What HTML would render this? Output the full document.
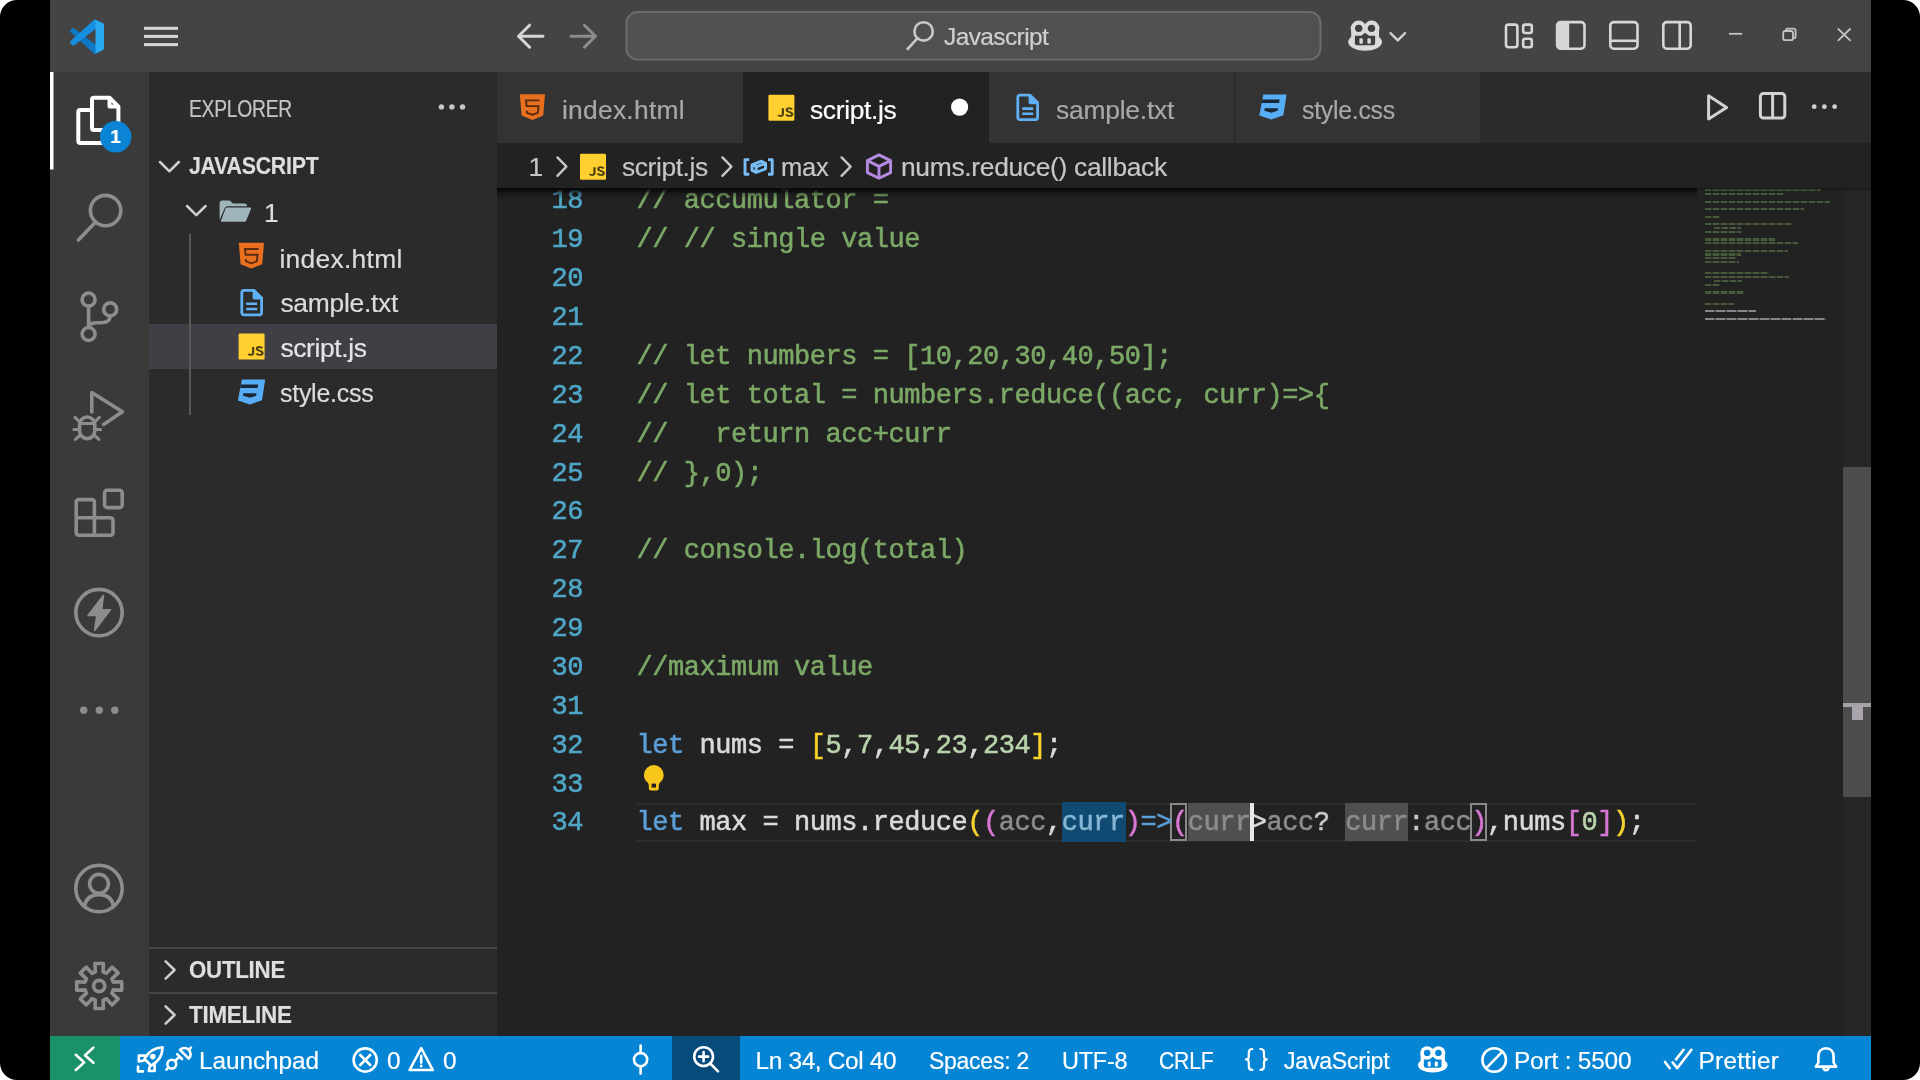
<!DOCTYPE html>
<html><head><meta charset="utf-8"><title>script.js - Javascript - Visual Studio Code</title>
<style>
*{margin:0;padding:0;box-sizing:content-box}
html,body{width:1920px;height:1080px;overflow:hidden;background:#fff;font-family:"Liberation Sans",sans-serif}
#frame{position:absolute;left:0;top:0;width:1920px;height:1080px;background:#000;border-radius:17px;overflow:hidden}
.gl{position:absolute;left:0;top:0;width:1920px;height:1080px;will-change:transform;background:transparent;filter:blur(0.5px)}
.abs{position:absolute}
.t{position:absolute;white-space:pre;line-height:1;font-family:"Liberation Sans",sans-serif;-webkit-text-stroke:0.2px currentColor}
.ln{position:absolute;left:497px;width:86px;text-align:right;white-space:pre;font-family:"Liberation Mono",monospace;font-size:27.0px;line-height:38.875px;letter-spacing:-0.453px;color:#4fa6c7;height:38.875px;-webkit-text-stroke:0.55px currentColor;margin-top:1.2px}
.cl{position:absolute;left:636.5px;white-space:pre;font-family:"Liberation Mono",monospace;font-size:27.0px;line-height:38.875px;letter-spacing:-0.453px;color:#dadada;height:38.875px;-webkit-text-stroke:0.55px currentColor;margin-top:1.2px}
.mm{position:absolute;height:2.2px;background:repeating-linear-gradient(90deg,rgba(120,170,95,.42) 0 6px,rgba(120,170,95,.16) 6px 8px)}
.mm.w{background:repeating-linear-gradient(90deg,rgba(215,215,215,.55) 0 9px,rgba(215,215,215,.25) 9px 11px)}
svg{position:absolute;left:0;top:0;overflow:visible;filter:blur(0.45px)}
</style></head>
<body>
<div id="frame">
  <!-- title bar -->
  <div class="abs" id="titlebar" style="left:50px;top:0;width:1821px;height:72px;background:#444444"></div>
  <!-- activity bar -->
  <div class="abs" id="activitybar" style="left:50px;top:72px;width:99px;height:964px;background:#3a3a3a"></div>
  <!-- sidebar -->
  <div class="abs" id="sidebar" style="left:149px;top:72px;width:348px;height:964px;background:#2b2b2b"></div>
  <div class="abs" style="left:149px;top:324px;width:348px;height:45px;background:#403f46"></div>
  <div class="abs" style="left:189px;top:234px;width:2px;height:180.5px;background:#585858"></div>
  <div class="abs" style="left:149px;top:946.5px;width:348px;height:2px;background:#454545"></div>
  <div class="abs" style="left:149px;top:991.5px;width:348px;height:2px;background:#454545"></div>
  <!-- editor -->
  <div class="abs" id="editor" style="left:497px;top:72px;width:1374px;height:964px;background:#222222"></div>
  <div class="abs" id="tabbar" style="left:497px;top:72px;width:1374px;height:71px;background:#2b2b2b"></div>
  <div class="abs" style="left:497px;top:72px;width:246px;height:71px;background:#333333"></div>
  <div class="abs" style="left:743px;top:72px;width:246px;height:71px;background:#222222"></div>
  <div class="abs" style="left:989px;top:72px;width:245px;height:71px;background:#333333"></div>
  <div class="abs" style="left:1235px;top:72px;width:245px;height:71px;background:#333333"></div>

  <!-- code area (clipped below breadcrumbs) -->
  <div class="abs" id="code" style="left:0;top:188px;width:1871px;height:848px;overflow:hidden">
   <div class="abs" style="left:0;top:-188px;width:1871px;height:1036px;will-change:transform;filter:blur(0.5px)">
<div style="position:absolute;left:636.5px;top:803.2px;width:1060.5px;height:38.9px;box-sizing:border-box;border-top:2px solid #2e2e2e;border-bottom:2px solid #2e2e2e"></div>
<div style="position:absolute;left:1061.8px;top:802.2px;width:64.0px;height:39.9px;background:#0f4a72"></div>
<div style="position:absolute;left:1187.8px;top:803.2px;width:63.0px;height:37.9px;background:#4f4f4f"></div>
<div style="position:absolute;left:1345.2px;top:803.2px;width:63.0px;height:37.9px;background:#4f4f4f"></div>
<div style="position:absolute;left:1170.0px;top:803.2px;width:16.8px;height:37.9px;box-sizing:border-box;border:2px solid #8a8a8a"></div>
<div style="position:absolute;left:1470.2px;top:803.2px;width:16.8px;height:37.9px;box-sizing:border-box;border:2px solid #8a8a8a"></div>
<div class="ln" style="top:181.20px">18</div>
<div class="cl" style="top:181.20px"><span style="color:#7ca866">// accumulator =</span></div>
<div class="ln" style="top:220.08px">19</div>
<div class="cl" style="top:220.08px"><span style="color:#7ca866">// // single value</span></div>
<div class="ln" style="top:258.95px">20</div>
<div class="ln" style="top:297.83px">21</div>
<div class="ln" style="top:336.70px">22</div>
<div class="cl" style="top:336.70px"><span style="color:#7ca866">// let numbers = [10,20,30,40,50];</span></div>
<div class="ln" style="top:375.58px">23</div>
<div class="cl" style="top:375.58px"><span style="color:#7ca866">// let total = numbers.reduce((acc, curr)=&gt;{</span></div>
<div class="ln" style="top:414.45px">24</div>
<div class="cl" style="top:414.45px"><span style="color:#7ca866">//   return acc+curr</span></div>
<div class="ln" style="top:453.33px">25</div>
<div class="cl" style="top:453.33px"><span style="color:#7ca866">// },0);</span></div>
<div class="ln" style="top:492.20px">26</div>
<div class="ln" style="top:531.08px">27</div>
<div class="cl" style="top:531.08px"><span style="color:#7ca866">// console.log(total)</span></div>
<div class="ln" style="top:569.95px">28</div>
<div class="ln" style="top:608.83px">29</div>
<div class="ln" style="top:647.70px">30</div>
<div class="cl" style="top:647.70px"><span style="color:#7ca866">//maximum value</span></div>
<div class="ln" style="top:686.58px">31</div>
<div class="ln" style="top:725.45px">32</div>
<div class="cl" style="top:725.45px"><span style="color:#5b9fd8">let</span><span style="color:#dadada"> nums = </span><span style="color:#f6d32d">[</span><span style="color:#b9d3ab">5</span><span style="color:#dadada">,</span><span style="color:#b9d3ab">7</span><span style="color:#dadada">,</span><span style="color:#b9d3ab">45</span><span style="color:#dadada">,</span><span style="color:#b9d3ab">23</span><span style="color:#dadada">,</span><span style="color:#b9d3ab">234</span><span style="color:#f6d32d">]</span><span style="color:#dadada">;</span></div>
<div class="ln" style="top:764.33px">33</div>
<div class="ln" style="top:803.20px">34</div>
<div class="cl" style="top:803.20px"><span style="color:#5b9fd8">let</span><span style="color:#dadada"> max = nums.reduce</span><span style="color:#f6d32d">(</span><span style="color:#d877d3">(</span><span style="color:#8c8c8c">acc</span><span style="color:#dadada">,</span><span style="color:#86b6d4">curr</span><span style="color:#d877d3">)</span><span style="color:#5b9fd8">=&gt;</span><span style="color:#d877d3">(</span><span style="color:#8c8c8c">curr</span><span style="color:#dadada">&gt;</span><span style="color:#8c8c8c">acc</span><span style="color:#c8c8c8">?</span> <span style="color:#8c8c8c">curr</span><span style="color:#c8c8c8">:</span><span style="color:#8c8c8c">acc</span><span style="color:#d877d3">)</span><span style="color:#dadada">,nums</span><span style="color:#d877d3">[</span><span style="color:#b9d3ab">0</span><span style="color:#d877d3">]</span><span style="color:#f6d32d">)</span><span style="color:#dadada">;</span></div>
<div style="position:absolute;left:1250.2px;top:803.2px;width:4px;height:37.9px;background:#e8e8e8"></div>
<div class="mm" style="left:1704.9px;top:188.8px;width:116.6px"></div>
<div class="mm" style="left:1704.9px;top:192.8px;width:78.8px"></div>
<div class="mm" style="left:1704.9px;top:200.5px;width:124.7px"></div>
<div class="mm" style="left:1704.9px;top:208.0px;width:99.6px"></div>
<div class="mm" style="left:1704.9px;top:215.6px;width:14.8px"></div>
<div class="mm" style="left:1704.9px;top:223.1px;width:87.0px"></div>
<div class="mm" style="left:1714.1px;top:227.0px;width:26.7px"></div>
<div class="mm" style="left:1704.9px;top:230.8px;width:35.9px"></div>
<div class="mm" style="left:1704.9px;top:238.4px;width:70.0px"></div>
<div class="mm" style="left:1704.9px;top:242.3px;width:92.9px"></div>
<div class="mm" style="left:1704.9px;top:249.5px;width:83.3px"></div>
<div class="mm" style="left:1704.9px;top:253.4px;width:35.9px"></div>
<div class="mm" style="left:1704.9px;top:257.2px;width:30.7px"></div>
<div class="mm" style="left:1704.9px;top:261.1px;width:34.4px"></div>
<div class="mm" style="left:1704.9px;top:272.3px;width:64.0px"></div>
<div class="mm" style="left:1704.9px;top:276.2px;width:84.0px"></div>
<div class="mm" style="left:1714.1px;top:280.0px;width:28.0px"></div>
<div class="mm" style="left:1704.9px;top:283.9px;width:14.8px"></div>
<div class="mm" style="left:1704.9px;top:291.4px;width:39.6px"></div>
<div class="mm" style="left:1704.9px;top:302.7px;width:29.2px"></div>
<div class="mm w" style="left:1704.9px;top:310.3px;width:51.4px"></div>
<div class="mm w" style="left:1704.9px;top:318.0px;width:121px"></div>
    <!-- scrollbar -->
    <div class="abs" style="left:1843px;top:188px;width:28px;height:848px;background:#262626"></div>
    <div class="abs" style="left:1843px;top:466.5px;width:28px;height:330px;background:#4d4d4d"></div>
    <div class="abs" style="left:1843px;top:703px;width:28px;height:4px;background:#a3a3a3"></div>
    <div class="abs" style="left:1852px;top:705px;width:11px;height:15px;background:#aaa4ac"></div>
   </div>
   <div class="abs" style="left:497px;top:0;width:1200px;height:11px;background:linear-gradient(rgba(8,8,8,.95) 0,rgba(8,8,8,.85) 20%,rgba(8,8,8,.35) 50%,rgba(8,8,8,0) 100%)"></div>
   <div class="abs" style="left:1698px;top:0;width:173px;height:3px;background:linear-gradient(rgba(10,10,10,.55),rgba(10,10,10,0))"></div>
  </div>

  <!-- status bar -->
  <div class="abs" id="statusbar" style="left:50px;top:1035.5px;width:1821px;height:45px;background:#0585d4"></div>
  <div class="abs" style="left:50px;top:1035.5px;width:69.5px;height:45px;background:#1b9168"></div>
  <div class="abs" style="left:672px;top:1035.5px;width:68px;height:45px;background:#064b7a"></div>

  <!-- ICONS -->
  <svg width="1920" height="1080" viewBox="0 0 1920 1080" fill="none">
<!-- ===== title bar ===== -->
<g id="vscode-logo" transform="translate(70 19.7) scale(0.34)">
  <path fill="#0f78c4" d="M96.46 89.2 L75.86 99.12 C73.47 100.27 70.62 99.79 68.75 97.92 L1.3 36.42 C-0.52 34.76 -0.51 31.91 1.3 30.25 L6.81 25.25 C8.3 23.9 10.53 23.8 12.13 25.01 L93.36 86.63 C96.09 88.7 100 86.75 100 83.33 V83.57 C100 85.97 98.62 88.16 96.46 89.2Z"/>
  <path fill="#178fe0" d="M96.46 10.8 L75.86 0.88 C73.47 -0.27 70.62 0.21 68.75 2.08 L1.3 63.58 C-0.52 65.24 -0.51 68.09 1.3 69.75 L6.81 74.75 C8.3 76.1 10.53 76.2 12.13 74.99 L93.36 13.37 C96.09 11.3 100 13.25 100 16.67 V16.43 C100 14.03 98.62 11.84 96.46 10.8Z"/>
  <path fill="#29a9f2" d="M75.86 99.13 C73.47 100.27 70.62 99.79 68.75 97.92 C71.06 100.22 75 98.59 75 95.33 V4.67 C75 1.41 71.06 -0.22 68.75 2.08 C70.62 0.21 73.47 -0.27 75.86 0.87 L96.45 10.78 C98.61 11.82 100 14.01 100 16.41 V83.59 C100 85.99 98.61 88.18 96.45 89.22 L75.86 99.13Z"/>
</g>
<g id="hamburger" fill="#d8d8d8">
  <rect x="144" y="26.8" width="34" height="3"/><rect x="144" y="34.9" width="34" height="3"/><rect x="144" y="43.1" width="34" height="3"/>
</g>
<g id="nav" stroke-width="3" stroke-linecap="round" stroke-linejoin="round">
  <path stroke="#d6d6d6" d="M543 36.200 H519 M529.600 25.200 L518.500 36.200 L529.600 47.200"/>
  <path stroke="#8c8c8c" d="M571 36.200 H595 M584.400 25.200 L595.500 36.200 L584.400 47.200"/>
</g>
<rect id="searchbox" x="626.5" y="12" width="694" height="47.5" rx="11" fill="#505050" stroke="#6b6b6b" stroke-width="2"/>
<g id="search-ic" stroke="#c9c9c9" stroke-width="2.6" stroke-linecap="round">
  <circle cx="923.6" cy="31.4" r="9.2"/><path d="M917.4 38.4 L907.6 49"/>
</g>
<g id="copilot-title" transform="translate(1348.2 20.4)">
  <g fill="#dadada"><circle cx="10.4" cy="8.1" r="7.9"/><circle cx="23.4" cy="8.1" r="7.9"/><ellipse cx="16.9" cy="21.7" rx="16.9" ry="8.6"/><rect x="3" y="10" width="27.800" height="12" /></g>
  <g fill="#3f3f3f"><ellipse cx="10.5" cy="7.9" rx="3.7" ry="3.6"/><ellipse cx="23.3" cy="7.9" rx="3.7" ry="3.600"/>
  <path d="M6.7 15.3 H13 L16.9 12.4 L20.8 15.3 H26.9 V22.800 a2 2 0 0 1 -2 2 H8.700 a2 2 0 0 1 -2 -2 Z"/></g>
  <g fill="#dadada"><rect x="11.2" y="17.8" width="3.4" height="5.600" rx="1.2"/><rect x="19.2" y="17.8" width="3.400" height="5.600" rx="1.200"/></g>
</g>
<path id="chev-title" stroke="#d0d0d0" stroke-width="2.4" stroke-linecap="round" stroke-linejoin="round" d="M1390.5 33.2 L1397.8 40.4 L1405 33.2"/>
<g id="layout-icons" stroke="#d6d6d6" stroke-width="2.6">
  <rect x="1506" y="24.6" width="11.4" height="22.6" rx="2.4"/>
  <rect x="1523.2" y="24.6" width="8.6" height="8.4" rx="2"/>
  <rect x="1523.2" y="38.8" width="8.6" height="8.4" rx="2"/>
  <rect x="1557.1" y="22.1" width="27.4" height="26.6" rx="3.4"/>
  <path fill="#d6d6d6" stroke="none" d="M1557.1 25.5 a3.4 3.4 0 0 1 3.4 -3.4 H1569.2 V48.7 H1560.5 a3.4 3.4 0 0 1 -3.4 -3.4 Z"/>
  <rect x="1610.3" y="22.1" width="27.2" height="26.6" rx="3.4"/>
  <path d="M1610.3 40.8 H1637.5"/>
  <rect x="1663.3" y="22.1" width="27.4" height="26.6" rx="3.4"/>
  <path d="M1679.7 22.1 V48.7"/>
</g>
<g id="winctl" stroke="#c4c4c4" stroke-width="1.8">
  <path d="M1729 33.8 H1742.2"/>
  <rect x="1783.2" y="31" width="9.8" height="9.2" rx="2"/>
  <path d="M1786 30.6 V30.4 a1.8 1.8 0 0 1 1.8 -1.8 H1793.6 a2 2 0 0 1 2 2 V36.4 a1.8 1.8 0 0 1 -1.8 1.8 H1793.4"/>
  <path d="M1837.8 28.5 L1850.6 40.8 M1850.6 28.5 L1837.8 40.8"/>
</g>

<!-- ===== activity bar ===== -->
<rect x="50" y="72" width="3.500" height="97.500" fill="#ffffff"/>
<g id="files" stroke="#ffffff" stroke-width="4" stroke-linejoin="round" stroke-linecap="round">
  <path d="M92 99.7 a2 2 0 0 1 2 -2 H109.5 L118.4 106.6 V128 a2 2 0 0 1 -2 2 H94 a2 2 0 0 1 -2 -2 Z"/>
  <path d="M109.5 98.2 V106.6 H118"/>
  <path d="M90.5 110 H80.3 a2 2 0 0 0 -2 2 V141 a2 2 0 0 0 2 2 H102.3 a2 2 0 0 0 2 -2 V132"/>
</g>
<circle cx="115.7" cy="136.8" r="15.7" fill="#0b84d6"/>
<g id="act-search" stroke="#8d8d8d" stroke-width="3.6" stroke-linecap="round">
  <circle cx="105.600" cy="210.600" r="15.200"/><path d="M95.400 222.200 L78.400 240"/>
</g>
<g id="act-git" stroke="#8d8d8d" stroke-width="3.6" stroke-linecap="round">
  <circle cx="88.600" cy="299.600" r="6.500"/><circle cx="88.600" cy="334" r="6.500"/><circle cx="110.200" cy="309.400" r="6.500"/>
  <path d="M88.6 306 V327.6 M110.2 315.8 C110.2 322.6 104 322.8 97 322.8 C93 322.8 89.6 323.6 88.6 326.6"/>
</g>
<g id="act-debug" stroke="#8d8d8d" stroke-width="3.6" stroke-linecap="round" stroke-linejoin="round">
  <path d="M91.8 412 V392.6 L122.4 411.8 L103.6 424.4"/>
  <path d="M79.6 424.6 a7.6 7.6 0 0 1 15.2 0 V431 a7.6 7.6 0 0 1 -15.2 0 Z"/>
  <path stroke-width="3" d="M80 423.4 H94.4 M79.4 421.6 L75 417.4 M95 421.6 L99.4 417.4 M79 429.4 H73.8 M95.4 429.4 H100.6 M80.4 435 L75.4 439.4 M94 435 L99 439.4"/>
</g>
<g id="act-ext" stroke="#8d8d8d" stroke-width="3.6" stroke-linejoin="round">
  <path d="M76.2 517.8 V502 a2.4 2.4 0 0 1 2.4 -2.4 H92 a2.4 2.4 0 0 1 2.4 2.4 V517.8 H110.6 a2.4 2.4 0 0 1 2.4 2.4 V532.8 a2.4 2.4 0 0 1 -2.4 2.4 H78.6 a2.4 2.4 0 0 1 -2.4 -2.4 Z"/>
  <path d="M76.2 517.8 H94.4 V535.2"/>
  <rect x="104.6" y="490.2" width="17.6" height="17.4" rx="2.6"/>
</g>
<g id="act-bolt">
  <circle cx="99" cy="612.6" r="23.2" stroke="#8d8d8d" stroke-width="3.6"/>
  <path fill="#8d8d8d" stroke="#8d8d8d" stroke-width="1.6" stroke-linejoin="round" d="M103.4 595.6 L88 615.4 H96.8 L94.6 630.4 L110.4 609.8 H101.6 Z"/>
</g>
<g id="act-more" fill="#8d8d8d"><circle cx="83.7" cy="710.2" r="3.7"/><circle cx="99.3" cy="710.2" r="3.7"/><circle cx="114.8" cy="710.2" r="3.7"/></g>
<g id="act-account" stroke="#8d8d8d" stroke-width="3.6" stroke-linecap="round">
  <circle cx="99" cy="888.5" r="23.2"/><circle cx="99" cy="883.8" r="9.4"/>
  <path d="M84.6 905.6 C86.4 897.6 92 894.6 99 894.6 C106 894.6 111.6 897.6 113.4 905.6"/>
</g>
<g id="act-gear" stroke="#8d8d8d" stroke-width="3.6" stroke-linejoin="round">
  <path d="M95.3 971.9 L95.0 963.5 L103.4 963.5 L103.1 971.9 L106.4 973.3 L112.1 967.1 L118.1 973.1 L111.9 978.8 L113.3 982.1 L121.7 981.8 L121.7 990.2 L113.3 989.9 L111.9 993.2 L118.1 998.9 L112.1 1004.9 L106.4 998.7 L103.1 1000.1 L103.4 1008.5 L95.0 1008.5 L95.3 1000.1 L92.0 998.7 L86.3 1004.9 L80.3 998.9 L86.5 993.2 L85.1 989.9 L76.7 990.2 L76.7 981.8 L85.1 982.1 L86.5 978.8 L80.3 973.1 L86.3 967.1 L92.0 973.3 Z"/><circle cx="99.200" cy="986" r="5.600"/>
</g>

<!-- ===== sidebar ===== -->
<g fill="#c8c8c8"><circle cx="441.4" cy="106.9" r="2.7"/><circle cx="451.9" cy="106.9" r="2.7"/><circle cx="462.5" cy="106.9" r="2.7"/></g>
<g stroke="#cfcfcf" stroke-width="2.5" stroke-linecap="round" stroke-linejoin="round">
  <path d="M160 162 L169.4 171.3 L178.8 162"/>
  <path d="M187 206 L196.3 215.2 L205.6 206"/>
  <path d="M165.6 961.4 L174.6 970 L165.6 978.6"/>
  <path d="M165.6 1006.4 L174.6 1015 L165.6 1023.6"/>
</g>
<g id="folder-open" fill="#a0b4bc">
  <path d="M219.600 203.200 a2.800 2.800 0 0 1 2.800 -2.800 H229.600 L233 203.400 H244.600 a2.400 2.400 0 0 1 2.400 2.400 V206.200 H227.400 a2.600 2.600 0 0 0 -2.400 1.600 L219.600 219.800 Z"/>
  <path d="M227.200 207.600 H250.200 a0.900 0.900 0 0 1 0.800 1.300 L246.200 220.400 a2 2 0 0 1 -1.800 1.300 H221.800 a0.900 0.900 0 0 1 -0.800 -1.300 L225.400 208.900 a2 2 0 0 1 1.800 -1.300 Z"/>
</g>

<!-- file icons -->
<defs>
  <g id="i-html">
    <path fill="#e8701e" d="M0.2 0 H25.4 L23.6 21.4 L12.8 25.8 L2 21.4 Z"/>
    <path fill="none" stroke="#5a2a10" stroke-width="1.900" stroke-linejoin="miter" d="M19.900 6.200 H6.400 L7 11.900 H19 L18.200 18.600 L12.800 20.500 L7.400 18.600 L7.200 16.400"/>
  </g>
  <g id="i-js">
    <rect x="0" y="0" width="26" height="26" rx="1.2" fill="#ffd02f"/>
    <path fill="none" stroke="#4f4212" stroke-width="2.2" transform="translate(0.900 2.100) scale(1 0.830)" d="M13.6 13.600 V20.400 C13.600 22.200 12.800 23.100 11.200 23.100 C10.100 23.100 9.400 22.700 8.800 21.900 M22.800 15.200 C22.100 14.200 21.200 13.600 19.900 13.600 C18.300 13.600 17.400 14.500 17.400 15.800 C17.400 18.800 23 17.700 23 20.700 C23 22.100 21.900 23.100 20.100 23.100 C18.600 23.100 17.500 22.500 16.800 21.300"/>
  </g>
  <g id="i-txt" fill="none" stroke="#5fb0f4" stroke-width="2.800" stroke-linejoin="round">
    <path d="M1.600 3.600 a2 2 0 0 1 2 -2 H13.800 L21.400 9.200 V24 a2 2 0 0 1 -2 2 H3.600 a2 2 0 0 1 -2 -2 Z"/>
    <path fill="#5fb0f4" d="M13.800 1.800 V9.200 H21.200 Z"/>
    <path stroke-width="2.600" d="M6 15 H17 M6 20.200 H17"/>
  </g>
  <g id="i-css">
    <path fill="#58aef6" d="M4.300 0.600 H27.600 L24.400 21.400 L12.400 25.600 L0.300 21.600 Z"/>
    <path fill="#1c2735" d="M3.200 5.800 H20.600 L20.100 9.200 H2.600 Z M5.600 14.400 H19 L18.600 17 L12.400 19 L5.400 17 Z"/>
  </g>
</defs>
<use href="#i-html" x="238.6" y="242.8"/>
<use href="#i-txt" x="240.2" y="288.8"/>
<use href="#i-js" x="238.6" y="333.6"/>
<use href="#i-css" x="237.6" y="378.8"/>
<!-- tabs -->
<use href="#i-html" x="519.6" y="94.2"/>
<use href="#i-js" x="768.4" y="94.8"/>
<use href="#i-txt" x="1016.2" y="93.6"/>
<use href="#i-css" x="1259" y="93.8"/>
<circle cx="959.6" cy="107.1" r="8.6" fill="#ffffff"/>
<rect x="1234" y="72" width="1.4" height="71" fill="#272727"/>
<!-- tab bar actions -->
<g stroke="#d2d2d2" stroke-width="3" stroke-linejoin="round">
  <path d="M1708.6 95.8 L1726.6 107.4 L1708.6 119 Z"/>
  <rect x="1760.4" y="93.6" width="24.4" height="24.4" rx="3"/>
  <path d="M1772.6 93.6 V118"/>
</g>
<g fill="#d2d2d2"><circle cx="1814.2" cy="106.7" r="2.4"/><circle cx="1824.4" cy="106.7" r="2.4"/><circle cx="1834.6" cy="106.7" r="2.4"/></g>

<!-- breadcrumbs -->
<g stroke="#c6c6c6" stroke-width="2.4" stroke-linecap="round" stroke-linejoin="round">
  <path d="M557.4 157.4 L566.4 166.6 L557.4 175.8"/>
  <path d="M722.4 157.4 L731.4 166.6 L722.4 175.8"/>
  <path d="M841.6 157.4 L850.6 166.6 L841.6 175.8"/>
</g>
<use href="#i-js" x="580" y="153.8" transform=""/>
<g id="sym-var" stroke="#78bdf6" stroke-width="2.900" stroke-linejoin="round" fill="none">
  <path d="M749.2 159.600 H745 V174.200 H749.200"/>
  <path d="M768 159.600 H772.200 V174.200 H768"/>
  <path d="M752 164.800 L761.400 161.200 L765.600 163.200 V168.800 L756.200 172.400 L752 170.400 Z M752 164.800 L756.200 166.800 L765.600 163.200 M756.200 166.800 V172.400"/>
</g>
<g id="sym-cube" stroke="#b48ae0" stroke-width="2.900" stroke-linejoin="round" fill="none">
  <path d="M879 154.900 L890.600 160.600 V172.600 L879 178.300 L867.400 172.600 V160.600 Z M867.400 160.600 L879 166.400 L890.600 160.600 M879 166.400 V178.300"/>
</g>

<!-- lightbulb -->
<g id="bulb">
  <path fill="#f7c61a" d="M653.8 765 a9.9 9.9 0 0 1 9.9 9.9 c0 3.6 -1.8 5.6 -3.4 7.4 c-0.9 1 -1.5 2 -1.5 3.2 V788.6 a2 2 0 0 1 -2 2 H650.8 a2 2 0 0 1 -2 -2 V785.5 c0 -1.2 -0.6 -2.2 -1.5 -3.2 c-1.6 -1.8 -3.4 -3.800 -3.4 -7.4 a9.900 9.900 0 0 1 9.900 -9.900 Z"/>
  <rect x="651.6" y="783.6" width="4.4" height="4" fill="#222"/>
</g>

<!-- ===== status bar ===== -->
<g stroke="#ffffff" stroke-width="2.6" stroke-linecap="round" stroke-linejoin="round" fill="none">
  <!-- remote -->
  <path d="M75.800 1054.800 L84.200 1062.400 L75.800 1070 M93.400 1047.600 L85 1055.200 L93.400 1062.800"/>
  <!-- rocket -->
  <path d="M162.600 1047.400 C155 1047.600 148.500 1051.500 144.500 1059 L151.200 1065.600 C158.600 1061.600 162.400 1055 162.600 1047.400 Z M147.400 1055.600 H138.800 V1061.600 L143.800 1060.400 M154.600 1063.200 V1071 H148.800 L149.800 1066.400 M138 1066.600 V1071.400 H143"/>
  <circle cx="152.800" cy="1056.600" r="1.500" fill="#ffffff"/>
  <!-- plug -->
  <circle cx="171.800" cy="1064.200" r="4.400"/>
  <path d="M168.600 1067.400 L166.400 1069.600 M175 1061 L178.400 1057.600 M177.200 1054.200 L182 1059 M180 1049.800 L188.800 1058.600 A6.220 6.220 0 0 0 180 1049.800 Z M188.600 1050 L191 1047.600"/>
  <!-- error / warn -->
  <circle cx="365.200" cy="1060" r="11.600"/><path d="M360.200 1055 L370.200 1065 M370.200 1055 L360.200 1065"/>
  <path d="M421.200 1048.200 L432.800 1070 H409.600 Z M421.200 1055.800 V1062.600 M421.200 1065.800 V1066.200"/>
  <!-- git commit -->
  <circle cx="640.6" cy="1059.600" r="6.600"/><path d="M640.6 1045.600 V1053 M640.6 1066.200 V1073.600"/>
  <!-- zoom in -->
  <circle cx="703.6" cy="1056.600" r="9.400"/><path d="M710.400 1063.600 L718 1071.400 M703.600 1052 V1061.200 M699 1056.600 H708.200"/>
  <!-- braces -->
  <path stroke-width="2.200" d="M1252.400 1049 C1249.400 1049 1248.800 1050.400 1248.800 1052.400 V1056.400 C1248.800 1058.400 1247.800 1059.400 1246 1059.400 C1247.800 1059.400 1248.800 1060.400 1248.800 1062.400 V1066.400 C1248.800 1068.400 1249.400 1069.800 1252.400 1069.800 M1260.400 1049 C1263.400 1049 1264 1050.400 1264 1052.400 V1056.400 C1264 1058.400 1265 1059.400 1266.800 1059.400 C1265 1059.400 1264 1060.400 1264 1062.400 V1066.400 C1264 1068.400 1263.400 1069.800 1260.400 1069.800"/>
  <!-- circle slash -->
  <circle cx="1494.200" cy="1060" r="11.800"/><path d="M1502.400 1051.600 L1486 1068.400"/>
  <!-- check all -->
  <path d="M1665 1062 L1669.800 1068.200 M1672.600 1062.400 L1677.200 1068.200 L1691.400 1049.800 M1683.600 1049.800 L1676 1059.400"/>
  <!-- bell -->
  <path d="M1826 1048.200 C1821 1048.200 1818.400 1051.800 1818.400 1056.200 V1062.600 L1815.800 1066.600 H1836.200 L1833.600 1062.600 V1056.200 C1833.600 1051.800 1831 1048.200 1826 1048.200 Z M1823.400 1067 C1823.400 1071.200 1828.600 1071.200 1828.600 1067"/>
</g>
<g id="copilot-status" transform="translate(1418 1046) scale(0.875)">
  <g fill="#ffffff"><circle cx="10.4" cy="8.1" r="7.9"/><circle cx="23.4" cy="8.1" r="7.9"/><ellipse cx="16.9" cy="21.7" rx="16.9" ry="8.6"/><rect x="3" y="10" width="27.800" height="12" /></g>
  <g fill="#0585d4"><ellipse cx="10.5" cy="7.9" rx="3.7" ry="3.6"/><ellipse cx="23.3" cy="7.9" rx="3.7" ry="3.600"/>
  <path d="M6.7 15.3 H13 L16.9 12.4 L20.8 15.3 H26.9 V22.800 a2 2 0 0 1 -2 2 H8.700 a2 2 0 0 1 -2 -2 Z"/></g>
  <g fill="#ffffff"><rect x="11.2" y="17.8" width="3.4" height="5.600" rx="1.2"/><rect x="19.2" y="17.8" width="3.400" height="5.600" rx="1.200"/></g>
</g>

  </svg>

  <div class="gl">
  <!-- badge text -->
  <div class="t" style="left:110.2px;top:127.2px;font-size:19px;font-weight:700;color:#fff">1</div>
<div class="t" style="left:944.00px;top:25.16px;font-size:24.5px;letter-spacing:-0.609px;color:#cfcfcf;">Javascript</div>
<div class="t" style="left:189.18px;top:97.68px;font-size:23.3px;letter-spacing:-0.250px;color:#c4c4c4;transform:scaleX(0.8248);transform-origin:0 0;">EXPLORER</div>
<div class="t" style="left:189.00px;top:155.38px;font-size:23.3px;letter-spacing:-0.250px;color:#dedede;font-weight:700;transform:scaleX(0.9143);transform-origin:0 0;">JAVASCRIPT</div>
<div class="t" style="left:264.00px;top:200.25px;font-size:26.4px;letter-spacing:0.000px;color:#dcdcdc;">1</div>
<div class="t" style="left:279.40px;top:246.05px;font-size:26.4px;letter-spacing:0.298px;color:#dcdcdc;">index.html</div>
<div class="t" style="left:280.40px;top:290.45px;font-size:26.4px;letter-spacing:-0.259px;color:#dcdcdc;">sample.txt</div>
<div class="t" style="left:280.40px;top:335.45px;font-size:26.4px;letter-spacing:-0.368px;color:#e4e4e4;">script.js</div>
<div class="t" style="left:280.40px;top:380.05px;font-size:26.4px;letter-spacing:-0.250px;color:#dcdcdc;transform:scaleX(0.9436);transform-origin:0 0;">style.css</div>
<div class="t" style="left:189.30px;top:959.38px;font-size:23.3px;letter-spacing:-0.250px;color:#dedede;font-weight:700;transform:scaleX(0.9551);transform-origin:0 0;">OUTLINE</div>
<div class="t" style="left:189.30px;top:1004.38px;font-size:23.3px;letter-spacing:-0.250px;color:#dedede;font-weight:700;transform:scaleX(0.9622);transform-origin:0 0;">TIMELINE</div>
<div class="t" style="left:562.00px;top:97.05px;font-size:26.4px;letter-spacing:0.254px;color:#a8a8a8;">index.html</div>
<div class="t" style="left:810.00px;top:97.05px;font-size:26.4px;letter-spacing:-0.343px;color:#ffffff;">script.js</div>
<div class="t" style="left:1056.00px;top:97.05px;font-size:26.4px;letter-spacing:-0.215px;color:#a8a8a8;">sample.txt</div>
<div class="t" style="left:1302.00px;top:97.05px;font-size:26.4px;letter-spacing:-0.250px;color:#a8a8a8;transform:scaleX(0.9395);transform-origin:0 0;">style.css</div>
<div class="t" style="left:528.60px;top:153.95px;font-size:26.4px;letter-spacing:0.000px;color:#c6c6c6;">1</div>
<div class="t" style="left:622.00px;top:153.95px;font-size:26.4px;letter-spacing:-0.406px;color:#c6c6c6;">script.js</div>
<div class="t" style="left:781.03px;top:153.95px;font-size:26.4px;letter-spacing:-0.250px;color:#c6c6c6;transform:scaleX(0.9676);transform-origin:0 0;">max</div>
<div class="t" style="left:901.00px;top:153.95px;font-size:26.4px;letter-spacing:-0.315px;color:#c6c6c6;">nums.reduce() callback</div>
<div class="t" style="left:199.00px;top:1048.65px;font-size:24.4px;letter-spacing:-0.081px;color:#ffffff;">Launchpad</div>
<div class="t" style="left:387.00px;top:1048.65px;font-size:24.4px;letter-spacing:0.000px;color:#ffffff;">0</div>
<div class="t" style="left:443.00px;top:1048.65px;font-size:24.4px;letter-spacing:0.000px;color:#ffffff;">0</div>
<div class="t" style="left:755.50px;top:1048.65px;font-size:24.4px;letter-spacing:-0.336px;color:#ffffff;">Ln 34, Col 40</div>
<div class="t" style="left:929.06px;top:1048.65px;font-size:24.4px;letter-spacing:-0.250px;color:#ffffff;transform:scaleX(0.9408);transform-origin:0 0;">Spaces: 2</div>
<div class="t" style="left:1062.04px;top:1048.65px;font-size:24.4px;letter-spacing:-0.250px;color:#ffffff;transform:scaleX(0.9619);transform-origin:0 0;">UTF-8</div>
<div class="t" style="left:1159.13px;top:1048.65px;font-size:24.4px;letter-spacing:-0.250px;color:#ffffff;transform:scaleX(0.8682);transform-origin:0 0;">CRLF</div>
<div class="t" style="left:1283.70px;top:1048.65px;font-size:24.4px;letter-spacing:-0.250px;color:#ffffff;transform:scaleX(0.9460);transform-origin:0 0;">JavaScript</div>
<div class="t" style="left:1514.00px;top:1048.65px;font-size:24.4px;letter-spacing:-0.176px;color:#ffffff;">Port : 5500</div>
<div class="t" style="left:1698.50px;top:1048.65px;font-size:24.4px;letter-spacing:0.244px;color:#ffffff;">Prettier</div>
  </div>
</div>
</body></html>
